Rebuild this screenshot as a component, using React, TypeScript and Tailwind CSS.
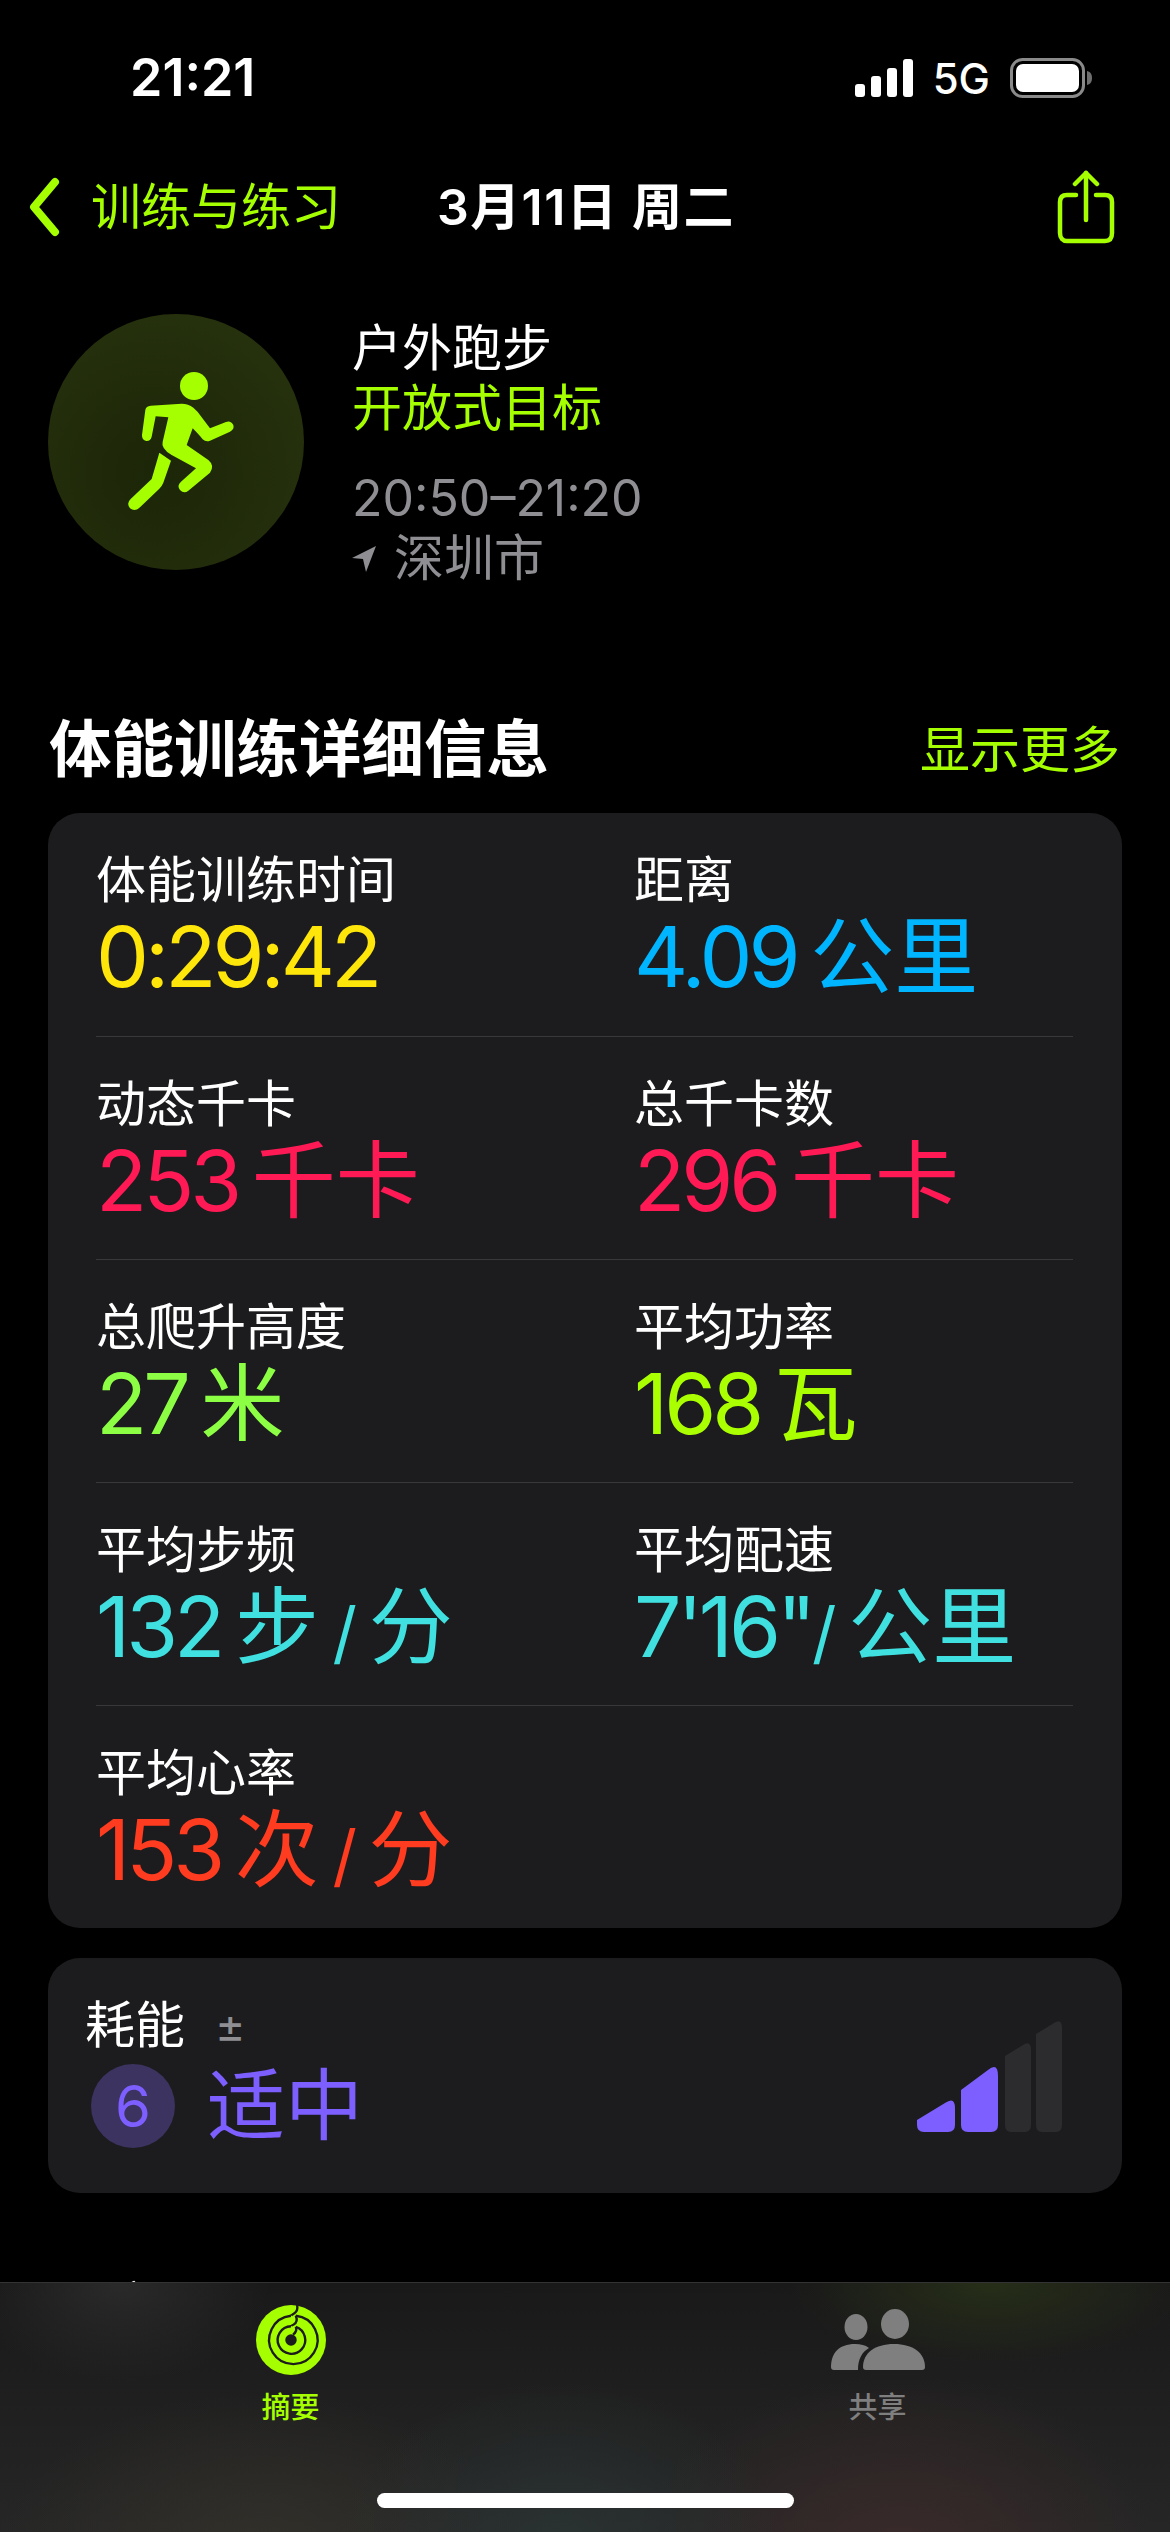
import React from 'react';

interface MetricProps {
    label: string;
    value: string;
    color: string;
}

const Metric: React.FC<MetricProps> = ({ label, value, color }) => (
    <div className="flex flex-col">
        <div className="text-[50px] leading-[60px] text-white">{label}</div>
        <div className={`text-[84px] leading-[94px] font-normal tracking-[-4px] [word-spacing:-6px] whitespace-nowrap ${color}`}>
            {/* the unit characters keep normal spacing, only the digits are tight */}
            {value.split(/([\u4e00-\u9fff]+|\/)/).map((part, i) => {
                if (part === '/') return <span key={i} className="text-[68px] tracking-[-2px]">/</span>;
                if (i % 2 === 1) return <span key={i} className="tracking-normal">{part}</span>;
                return <span key={i}>{part}</span>;
            })}
        </div>
    </div>
);

const rows: MetricProps[][] = [
    [
        { label: '体能训练时间', value: '0:29:42', color: 'text-[#ffe60a]' },
        { label: '距离', value: '4.09 公里', color: 'text-[#00b5ff]' },
    ],
    [
        { label: '动态千卡', value: '253 千卡', color: 'text-[#ff1a55]' },
        { label: '总千卡数', value: '296 千卡', color: 'text-[#ff1a55]' },
    ],
    [
        { label: '总爬升高度', value: '27 米', color: 'text-[#8cff45]' },
        { label: '平均功率', value: '168 瓦', color: 'text-[#aaff00]' },
    ],
    [
        { label: '平均步频', value: '132 步 / 分', color: 'text-[#40e0e0]' },
        { label: '平均配速', value: '7\'16"/ 公里', color: 'text-[#40e0e0]' },
    ],
    [{ label: '平均心率', value: '153 次 / 分', color: 'text-[#ff3b20]' }],
];

const Runner = () => (
    <svg viewBox="24 42 768 768" className="w-full h-full" fill="#a6ff00">
        <circle cx="462" cy="258" r="42" />
        <path d="M306 405 L316 330 Q318 318 332 317 L425 311 Q445 311 460 323 Q475 335 485 352 L510 385 L558 366 Q572 360 580 375 Q584 388 570 395 L510 422 Q498 427 488 418 Q478 405 458 385 L440 435 L505 480 Q525 497 510 518 L445 572 Q432 582 420 570 Q410 556 423 545 L468 505 L395 465 Q362 445 368 425 L385 352 L347 349 L335 410 Q331 424 319 423 Q305 420 306 405 Z" />
        <path d="M358 458 L393 482 L370 548 Q365 560 358 566 L300 622 Q285 637 270 625 Q258 610 272 597 L335 537 Z" />
    </svg>
);

const App: React.FC = () => {
    return (
        <div className="relative w-[1170px] h-[2532px] overflow-hidden bg-black text-white font-['Inter','Noto_Sans_CJK_SC',sans-serif]">
            {/* status bar */}
            <div className="h-[156px] flex items-center justify-between pl-[130px] pr-[78px]">
                <div className="text-[52px] font-semibold">21:21</div>
                <div className="flex items-center gap-[20px]">
                    <svg width="58" height="38" viewBox="0 0 58 38" fill="#fff">
                        <rect x="0" y="25" width="10" height="13" rx="3" />
                        <rect x="16" y="17" width="10" height="21" rx="3" />
                        <rect x="32" y="9" width="10" height="29" rx="3" />
                        <rect x="48" y="0" width="10" height="38" rx="3" />
                    </svg>
                    <div className="text-[42px] font-medium">5G</div>
                    <svg width="82" height="40" viewBox="0 0 82 40">
                        <rect x="1.5" y="1.5" width="72" height="37" rx="11" fill="none" stroke="#8a8a8a" strokeWidth="3" />
                        <rect x="6" y="6" width="63" height="28" rx="7" fill="#fff" />
                        <path d="M77 13 C81 14 82 17 82 20 C82 23 81 26 77 27 Z" fill="#6f6f6f" />
                    </svg>
                </div>
            </div>

            {/* nav */}
            <div className="relative h-[102px] flex items-center justify-between pl-[28px] pr-[55px]">
                <div className="flex items-center gap-[31px]">
                    <svg width="32" height="60" viewBox="0 0 32 60" fill="none">
                        <path d="M27 5 L6 30 L27 55" stroke="#a6ff00" strokeWidth="8" strokeLinecap="round" strokeLinejoin="round" />
                    </svg>
                    <div className="text-[50px] text-[#a6ff00]">训练与练习</div>
                </div>
                <div className="absolute left-[437px] top-[21px] text-[50px] leading-[60px] font-semibold tracking-[1.4px] whitespace-nowrap">3月11日 周二</div>
                <svg width="58" height="74" viewBox="0 0 58 74" fill="none" stroke="#a6ff00" strokeWidth="4.5" strokeLinecap="round" strokeLinejoin="round">
                    <path d="M29 3 V50" />
                    <path d="M18 14 L29 3 L40 14" />
                    <path d="M19 25 H10 C5 25 3 28 3 32 V63 C3 68 6 71 10 71 H48 C53 71 55 68 55 63 V32 C55 28 53 25 48 25 H39" />
                </svg>
            </div>

            {/* workout header */}
            <div className="flex pl-[48px] pt-[56px] gap-[48px]">
                <div className="w-[256px] h-[256px] rounded-full bg-[radial-gradient(circle_at_42%_62%,#1c2608,#29340f)]">
                    <Runner />
                </div>
                <div className="flex flex-col">
                    <div className="text-[50px] leading-[60px] mt-[4px]">户外跑步</div>
                    <div className="text-[50px] leading-[60px] text-[#a6ff00]">开放式目标</div>
                    <div className="text-[50px] leading-[60px] mt-[30px] text-[#8e8e93]">20:50–21:20</div>
                    <div className="flex items-center gap-[18px] text-[50px] leading-[60px] text-[#8e8e93]">
                        <svg width="24" height="28" viewBox="0 0 24 28" fill="#8e8e93">
                            <path d="M24 2 L14 28 L11 15 L0 14 Z" />
                        </svg>
                        深圳市
                    </div>
                </div>
            </div>

            {/* section title */}
            <div className="flex items-center justify-between pl-[49px] pr-[50px] mt-[127px] h-[70px]">
                <div className="text-[62.5px] font-bold">体能训练详细信息</div>
                <div className="text-[50px] text-[#a6ff00]">显示更多</div>
            </div>

            {/* details card */}
            <div className="mx-[48px] mt-[28px] w-[1074px] rounded-[32px] bg-[#1c1c1e] pl-[48px] pr-[49px]">
                {rows.map((row, i) => (
                    <div key={i} className={`grid grid-cols-[538px_1fr] pt-[37px] h-[223px] ${i > 0 ? 'border-t border-[#38383a]' : ''}`}>
                        {row.map((m) => (
                            <Metric key={m.label} {...m} />
                        ))}
                    </div>
                ))}
            </div>

            {/* effort card */}
            <div className="mx-[48px] mt-[30px] w-[1074px] h-[235px] rounded-[32px] bg-[#1c1c1e] pl-[37px] pr-[60px] pt-[37px] flex items-start justify-between">
                <div className="flex flex-col">
                    <div className="flex items-center gap-[30px]">
                        <div className="text-[50px] leading-[60px]">耗能</div>
                        <div className="text-[46px] leading-[60px] text-[#8e8e93]">±</div>
                    </div>
                    <div className="flex items-center gap-[32px] mt-[9px] pl-[6px]">
                        <div className="w-[84px] h-[84px] rounded-full bg-[#3c3360] flex items-center justify-center text-[58px] font-normal text-[#7d5fff]">6</div>
                        <div className="text-[78px] leading-[84px] text-[#7d5fff]">适中</div>
                    </div>
                </div>
                <svg width="145" height="113" viewBox="0 0 145 113" className="mt-[25px]">
                    <path d="M0 100 L28 83 Q38 76 38 88 V105 Q38 112 31 112 H7 Q0 112 0 105 Z" fill="#7d5fff" />
                    <path d="M44 70 L71 50 Q81 42 81 56 V105 Q81 112 74 112 H51 Q44 112 44 105 Z" fill="#7d5fff" />
                    <path d="M88 36 L106 25 Q114 20 114 30 V105 Q114 112 108 112 H94 Q88 112 88 105 Z" fill="#2c2c2e" />
                    <path d="M119 14 L137 3 Q145 -2 145 8 V105 Q145 112 139 112 H125 Q119 112 119 105 Z" fill="#2c2c2e" />
                </svg>
            </div>

            {/* content going under the tab bar */}
            <div className="pl-[49px] mt-[85px] text-[62px] font-bold leading-[70px]">分段</div>

            {/* tab bar */}
            <div className="absolute left-0 right-0 bottom-0 h-[250px] border-t border-[#333] bg-[radial-gradient(ellipse_220px_160px_at_560px_260px,#2a3232,transparent),radial-gradient(ellipse_260px_180px_at_900px_270px,#3a2a2a,transparent),radial-gradient(ellipse_260px_160px_at_260px_270px,#32302a,transparent),radial-gradient(ellipse_200px_80px_at_990px_0px,#262e18,transparent),radial-gradient(ellipse_150px_100px_at_120px_0px,#2a2a2a,transparent),linear-gradient(#191919,#262626)]">
                <div className="grid grid-cols-2 h-full">
                    <div className="flex flex-col items-center pt-[22px] ml-[-4px]">
                        <svg width="70" height="70" viewBox="0 0 208 208" fill="none" stroke="#1c1c1c" strokeWidth="7">
                            <circle cx="104" cy="104" r="104" fill="#a6ff00" stroke="none" />
                            <path d="M118 32 A72 72 0 1 1 104 32" />
                            <path d="M118 65 A41 41 0 1 1 104 63" />
                            <circle cx="104" cy="104" r="17" fill="#1c1c1c" stroke="none" />
                            <path d="M122 0 Q126 18 112 26 Q104 31 104 32" />
                            <path d="M118 32 Q126 50 112 58 Q104 62 104 63" />
                            <path d="M118 65 Q124 78 110 88" />
                        </svg>
                        <div className="text-[29px] leading-[36px] mt-[15px] text-[#a6ff00] font-medium">摘要</div>
                    </div>
                    <div className="flex flex-col items-center pt-[26px]">
                        <svg width="94" height="62" viewBox="0 0 94 62" fill="#7f7f7f">
                            <ellipse cx="25" cy="18" rx="11.5" ry="13" />
                            <ellipse cx="64" cy="15" rx="14" ry="15" />
                            <path d="M0 58 C0 44 8 35 24 35 C30 35 34 36 38 39 C31 43 27 50 27 61 H3 Q0 61 0 58 Z" />
                            <path d="M32 58 C32 44 44 35 63 35 C82 35 94 44 94 58 Q94 61 91 61 H35 Q32 61 32 58 Z" />
                        </svg>
                        <div className="text-[29px] leading-[36px] mt-[19px] text-[#7f7f7f] font-medium">共享</div>
                    </div>
                </div>
                <div className="absolute left-[377px] bottom-[24px] w-[417px] h-[15px] rounded-full bg-white" />
            </div>
        </div>
    );
};

export default App;
